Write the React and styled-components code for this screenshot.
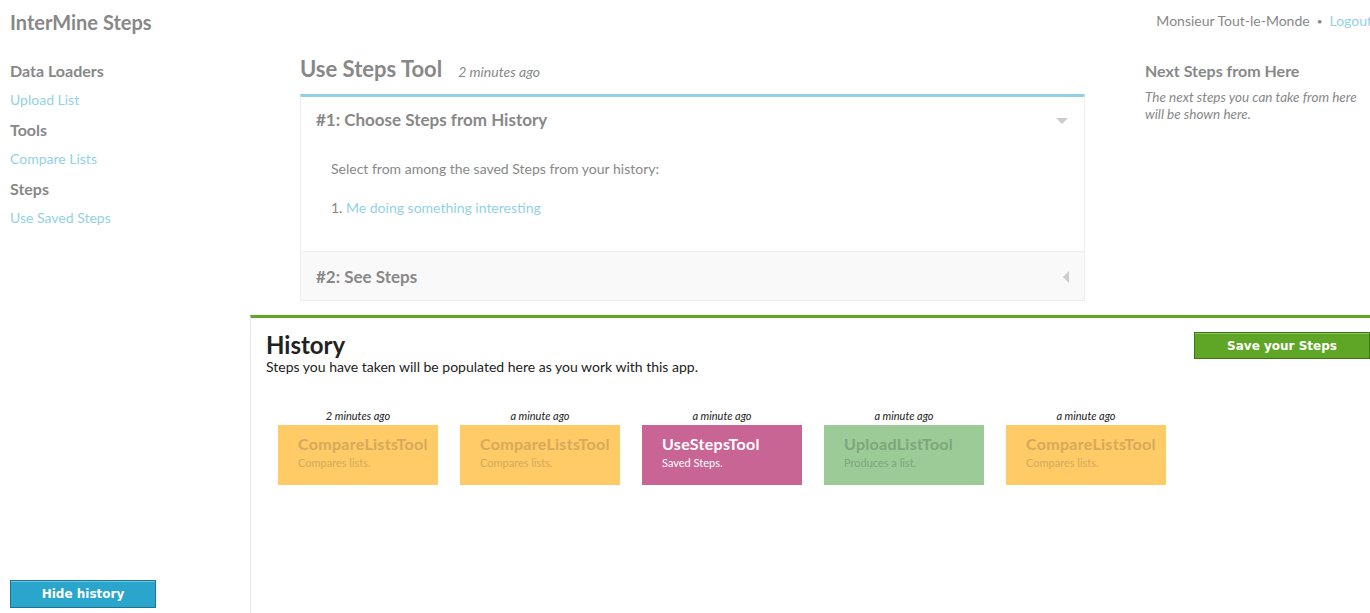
import React from 'react'
import styled, { createGlobalStyle } from 'styled-components'

const GlobalStyle = createGlobalStyle`
  html, body {
    margin: 0;
    padding: 0;
    overflow: hidden;
    background: #fff;
  }
  body {
    font-family: Lato, "Open Sans", sans-serif;
    color: #888;
  }
`

const Page = styled.div`
  display: flex;
  width: 1370px;
  height: 613px;
  overflow: hidden;
`

const Sidebar = styled.div`
  width: 250px;
  flex-shrink: 0;
  display: flex;
  flex-direction: column;
  padding: 10px 10px 5px;
  box-sizing: border-box;
`

const Brand = styled.div`
  font-size: 20px;
  font-weight: 700;
  color: #888;
  line-height: 24px;
  margin-bottom: 27px;
`

const NavHeading = styled.div`
  font-size: 16px;
  font-weight: 700;
  color: #888;
  line-height: 20px;
  margin-bottom: 9px;
`

const NavLink = styled.a`
  display: block;
  font-size: 14px;
  color: #93d1e6;
  line-height: 20px;
  margin-bottom: 10px;
  text-decoration: none;
`

const Spacer = styled.div`
  flex: 1;
`

const BlueButton = styled.button`
  width: 146px;
  height: 28px;
  background: #2aa5cb;
  border: 1px solid #1a7592;
  box-shadow: inset 0 1px 0 rgba(255, 255, 255, 0.35);
  color: #fff;
  font-family: "DejaVu Sans", sans-serif;
  font-weight: 700;
  font-size: 12px;
  padding: 0;
`

const Workspace = styled.div`
  flex: 1;
  display: flex;
  flex-direction: column;
  min-width: 0;
`

const TopBar = styled.div`
  display: flex;
  align-items: center;
  justify-content: flex-end;
  height: 42px;
  padding-bottom: 1px;
  box-sizing: border-box;
  margin-right: -2px;
  white-space: nowrap;
  font-size: 14px;
  color: #888;
`

const Dot = styled.span`
  margin: 0 7px;
  font-size: 10px;
`

const Logout = styled.a`
  color: #93d1e6;
  text-decoration: none;
`

const Content = styled.div`
  display: flex;
  padding-left: 50px;
  gap: 60px;
  height: 273px;
`

const Main = styled.div`
  width: 785px;
  flex-shrink: 0;
`

const TitleRow = styled.div`
  display: flex;
  align-items: baseline;
  gap: 16px;
  margin-top: 13px;
  height: 39px;
`

const Title = styled.h1`
  margin: 0;
  font-size: 22px;
  font-weight: 700;
  color: #888;
`

const Stamp = styled.span`
  font-size: 14px;
  font-style: italic;
  color: #888;
`

const Panel = styled.div`
  border-top: 3px solid #8fd0e2;
  border-left: 1px solid #eee;
  border-right: 1px solid #eee;
  border-bottom: 1px solid #eee;
`

const StepHeader = styled.div`
  display: flex;
  align-items: center;
  justify-content: space-between;
  height: ${p => (p.open ? '45px' : '48px')};
  padding: 0 15px;
  background: ${p => (p.open ? '#fff' : '#f9f9f9')};
  border-top: ${p => (p.open ? 'none' : '1px solid #eee')};
  font-size: 17px;
  font-weight: 700;
  color: #888;
`

const ArrowDown = styled.span`
  width: 0;
  height: 0;
  border-left: 6px solid transparent;
  border-right: 6px solid transparent;
  border-top: 6px solid #ccc;
  margin-right: 1px;
  margin-top: 2px;
`

const ArrowLeft = styled.span`
  width: 0;
  height: 0;
  border-top: 6px solid transparent;
  border-bottom: 6px solid transparent;
  border-right: 6px solid #ccc;
  margin-top: 2px;
`

const StepBody = styled.div`
  padding: 18px 30px 0;
  font-size: 14px;
  color: #888;
  height: 109px;
  box-sizing: border-box;
`

const BodyText = styled.p`
  margin: 0 0 21px;
  line-height: 18px;
`

const SavedList = styled.ol`
  margin: 0;
  padding-left: 0;
  list-style-position: inside;
  line-height: 18px;
`

const Aside = styled.div`
  width: 225px;
  flex-shrink: 0;
  padding-top: 19px;
`

const AsideTitle = styled.div`
  font-size: 16px;
  font-weight: 700;
  color: #888;
  line-height: 20px;
  margin-bottom: 8px;
`

const AsideText = styled.div`
  font-size: 13.5px;
  font-style: italic;
  color: #888;
  line-height: 17px;
`

const History = styled.div`
  flex: 1;
  border-top: 3px solid #5fa526;
  border-left: 1px solid #e5e5e5;
  padding: 13px 0 0 15px;
  display: flex;
  flex-direction: column;
`

const HistoryHead = styled.div`
  display: flex;
  justify-content: space-between;
  align-items: flex-start;
`

const HistoryTitle = styled.h2`
  margin: 0;
  font-size: 24px;
  font-weight: 700;
  color: #222;
  line-height: 28px;
`

const HistoryText = styled.p`
  margin: 0;
  font-size: 14px;
  color: #222;
  line-height: 16px;
`

const GreenButton = styled.button`
  width: 176px;
  height: 27px;
  margin-top: 1px;
  background: #5fa526;
  border: 1px solid #3b7614;
  box-shadow: inset 0 1px 0 rgba(255, 255, 255, 0.3);
  color: #fff;
  font-family: "DejaVu Sans", sans-serif;
  font-weight: 700;
  font-size: 12px;
  padding: 0;
`

const Cards = styled.div`
  display: flex;
  gap: 22px;
  padding-left: 12px;
  margin-top: 34px;
`

const CardWrap = styled.div`
  width: 160px;
  display: flex;
  flex-direction: column;
  align-items: center;
`

const CardStamp = styled.div`
  font-size: 11px;
  font-style: italic;
  color: #222;
  line-height: 14px;
  margin-bottom: 2px;
`

const Card = styled.div`
  width: 160px;
  height: 60px;
  box-sizing: border-box;
  padding: 9px 20px 0;
  background: ${p => p.bg};
  color: ${p => p.fg};
`

const CardTitle = styled.div`
  font-size: 16px;
  font-weight: 700;
  letter-spacing: 0.3px;
  line-height: 20px;
  white-space: nowrap;
`

const CardText = styled.div`
  font-size: 11px;
  line-height: 18px;
`

const palette = {
  compare: { bg: '#fecb66', fg: '#d6aa5c' },
  steps: { bg: '#c96595', fg: '#fff' },
  upload: { bg: '#9ccb98', fg: '#7fa67b' },
}

const history = [
  { when: '2 minutes ago', name: 'CompareListsTool', text: 'Compares lists.', kind: 'compare' },
  { when: 'a minute ago', name: 'CompareListsTool', text: 'Compares lists.', kind: 'compare' },
  { when: 'a minute ago', name: 'UseStepsTool', text: 'Saved Steps.', kind: 'steps' },
  { when: 'a minute ago', name: 'UploadListTool', text: 'Produces a list.', kind: 'upload' },
  { when: 'a minute ago', name: 'CompareListsTool', text: 'Compares lists.', kind: 'compare' },
]

const App = () => (
  <Page>
    <GlobalStyle />
    <Sidebar>
      <Brand>InterMine Steps</Brand>
      <NavHeading>Data Loaders</NavHeading>
      <NavLink href="#">Upload List</NavLink>
      <NavHeading>Tools</NavHeading>
      <NavLink href="#">Compare Lists</NavLink>
      <NavHeading>Steps</NavHeading>
      <NavLink href="#">Use Saved Steps</NavLink>
      <Spacer />
      <BlueButton>Hide history</BlueButton>
    </Sidebar>
    <Workspace>
      <TopBar>
        Monsieur Tout-le-Monde<Dot>•</Dot><Logout href="#">Logout</Logout>
      </TopBar>
      <Content>
        <Main>
          <TitleRow>
            <Title>Use Steps Tool</Title>
            <Stamp>2 minutes ago</Stamp>
          </TitleRow>
          <Panel>
            <StepHeader open>
              #1: Choose Steps from History
              <ArrowDown />
            </StepHeader>
            <StepBody>
              <BodyText>Select from among the saved Steps from your history:</BodyText>
              <SavedList>
                <li><Logout href="#">Me doing something interesting</Logout></li>
              </SavedList>
            </StepBody>
            <StepHeader>
              #2: See Steps
              <ArrowLeft />
            </StepHeader>
          </Panel>
        </Main>
        <Aside>
          <AsideTitle>Next Steps from Here</AsideTitle>
          <AsideText>The next steps you can take from here will be shown here.</AsideText>
        </Aside>
      </Content>
      <History>
        <HistoryHead>
          <div>
            <HistoryTitle>History</HistoryTitle>
            <HistoryText>Steps you have taken will be populated here as you work with this app.</HistoryText>
          </div>
          <GreenButton>Save your Steps</GreenButton>
        </HistoryHead>
        <Cards>
          {history.map((h, i) => (
            <CardWrap key={i}>
              <CardStamp>{h.when}</CardStamp>
              <Card bg={palette[h.kind].bg} fg={palette[h.kind].fg}>
                <CardTitle>{h.name}</CardTitle>
                <CardText>{h.text}</CardText>
              </Card>
            </CardWrap>
          ))}
        </Cards>
      </History>
    </Workspace>
  </Page>
)

export default App
